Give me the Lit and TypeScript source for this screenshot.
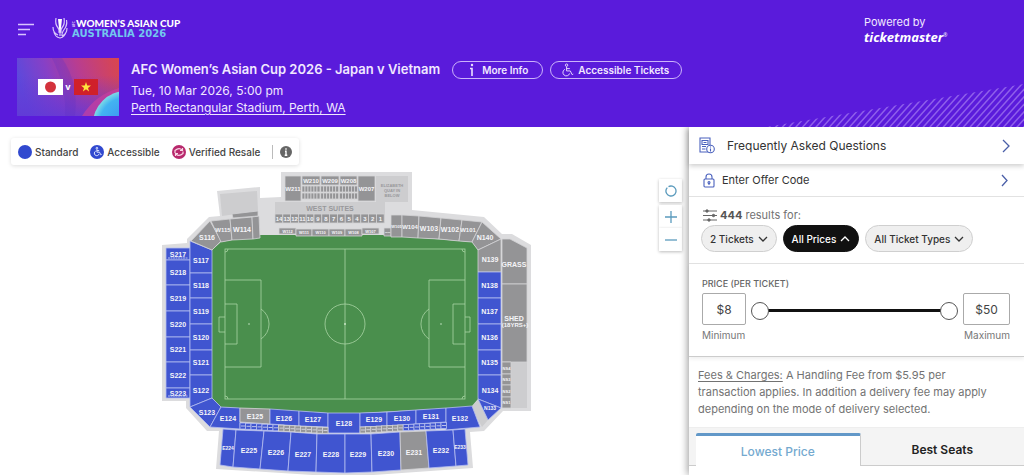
import { LitElement, html, svg, css } from "lit";
import { customElement, state } from "lit/decorators.js";

type Tone = "sold" | "open";
interface Section { label: string; points: string; x: number; y: number; tone: Tone; size?: number; }

const sec = (label: string, tone: Tone, points: string, x: number, y: number, size = 7): Section => ({ label, tone, points, x, y, size });
const box = (label: string, tone: Tone, x1: number, y1: number, x2: number, y2: number, size = 7): Section =>
  sec(label, tone, `${x1},${y1} ${x2},${y1} ${x2},${y2} ${x1},${y2}`, (x1 + x2) / 2, (y1 + y2) / 2, size);

const SECTIONS: Section[] = [
  box("S217", "open", 166, 248, 190, 260), box("S218", "open", 166, 260, 190, 285),
  box("S219", "open", 166, 285, 190, 311), box("S220", "open", 166, 311, 190, 337),
  box("S221", "open", 166, 337, 190, 362), box("S222", "open", 166, 362, 190, 388),
  box("S223", "open", 166, 388, 190, 398),
  sec("S117", "open", "190,241 212,250 212,273 190,273", 201, 260),
  box("S118", "open", 190, 273, 212, 298), box("S119", "open", 190, 298, 212, 324),
  box("S120", "open", 190, 324, 212, 350), box("S121", "open", 190, 350, 212, 375),
  sec("S122", "open", "190,375 212,375 212,398 190,407", 201, 390),
  sec("S123", "open", "190,407 212,398 221,407 210,427", 207, 412),
  sec("S116", "sold", "210,221 221,241 212,250 191,241", 207, 237),
  sec("W115", "sold", "211,221 230,219 232,240 221,242", 223, 230, 6),
  sec("W114", "sold", "230,219 252,217 253,239 232,240", 242, 229),
  sec("", "sold", "252,217 259,216 260,238 253,239", 256, 228, 3),
  sec("", "sold", "232,214 258,211 258,216 233,218", 256, 228, 3),
  box("W211", "sold", 285, 176, 301, 201, 6),
  box("W210", "sold", 302, 176, 320, 185, 6), box("W209", "sold", 321, 176, 339, 185, 6),
  box("W208", "sold", 340, 176, 357, 185, 6), box("W207", "sold", 358, 176, 375, 201, 6),
  box("W112", "sold", 279, 228, 296, 234, 4), box("W111", "sold", 296, 229, 312, 236, 4),
  box("W110", "sold", 312, 229, 329, 236, 4), box("W109", "sold", 329, 229, 345, 236, 4),
  box("W108", "sold", 345, 229, 362, 236, 4), box("W107", "sold", 362, 228, 379, 234, 4),
  box("W106", "sold", 384, 228, 391, 236, 2),
  box("W105", "sold", 391, 215, 402, 237, 4),
  sec("W104", "sold", "402,215 419,216 418,238 402,237", 410, 227, 6),
  sec("W103", "sold", "419,216 441,218 439,239 418,238", 429, 228),
  sec("W102", "sold", "441,218 462,220 459,241 439,239", 450, 229),
  sec("W101", "sold", "462,220 482,222 472,242 459,241", 468, 230, 6),
  sec("N140", "sold", "482,222 501,239 478,250 472,242", 485, 237),
  sec("N139", "sold", "478,250 501,239 501,272 478,272", 490, 259),
  box("N138", "open", 478, 272, 501, 298), box("N137", "open", 478, 298, 501, 324),
  box("N136", "open", 478, 324, 501, 350), box("N135", "open", 478, 350, 501, 375),
  sec("N134", "open", "478,375 501,375 501,408 478,399", 490, 390),
  sec("N133", "open", "478,399 501,408 488,420", 490, 408, 5),
  sec("GRASS", "sold", "502,239 510,239 527,248 527,284 502,284", 514, 264),
  box("", "sold", 502, 284, 527, 362),
  box("NS4", "sold", 502, 362, 511, 374, 4), box("NS3", "sold", 502, 374, 511, 385, 4),
  box("NS2", "sold", 502, 385, 511, 397, 4), box("NS1", "sold", 502, 397, 511, 408, 4),
  sec("E124", "open", "221,407 240,408 240,429 210,427", 228, 418),
  sec("E125", "sold", "240,408 270,409 270,424 240,422", 255, 416),
  sec("E126", "open", "270,409 299,411 299,426 270,424", 284, 418),
  sec("E127", "open", "299,411 328,413 328,427 299,426", 313, 419),
  sec("E128", "open", "328,413 360,413 360,433 328,433", 344, 423),
  sec("E129", "open", "360,413 387,412 387,426 360,427", 374, 419),
  sec("E130", "open", "387,412 416,410 416,424 387,426", 402, 418),
  sec("E131", "open", "416,410 446,408 446,422 416,424", 431, 416),
  sec("E132", "open", "446,408 472,406 480,427 446,430", 460, 418),
  sec("E224", "open", "223,429 236,430 233,467 220,465", 228, 448, 5),
  sec("E225", "open", "236,430 264,431 260,469 233,467", 249, 450),
  sec("E226", "open", "264,431 291,432 288,471 260,469", 276, 452),
  sec("E227", "open", "291,432 317,434 316,472 288,471", 303, 454),
  sec("E228", "open", "317,434 345,434 345,473 316,472", 331, 454),
  sec("E229", "open", "345,434 371,434 372,472 345,473", 358, 454),
  sec("E230", "open", "371,434 400,432 401,470 372,472", 386, 453),
  sec("E231", "sold", "400,432 426,431 429,468 401,470", 414, 452),
  sec("E232", "open", "426,431 453,430 456,466 429,468", 441, 450),
  sec("E233", "open", "453,430 465,429 468,465 456,466", 460, 447, 5),
];

const range = (n: number) => Array.from({ length: n }, (_, i) => i);

const chevron = (d: string, w: number, h: number) => html`<svg class="chev" width=${w} height=${h} viewBox="0 0 ${w} ${h}" aria-hidden="true"><path d=${d} /></svg>`;
const wheelchair = svg`<circle cx="6" cy="1.8" r="1.3"/><path d="M6 3.5V8h4l2 4 1.2-.6M6 5.5h3.5M4.2 6.3A3.7 3.7 0 1 0 9.3 10.7"/>`;

@customElement("seat-map")
export class SeatMap extends LitElement {
  static styles = css`
    :host { display: flex; justify-content: center; }
    svg { display: block; font-family: "Liberation Sans", Arial, sans-serif; font-weight: 700; }
    .shell { fill: #dcdcde; }
    .pale { fill: #cdcdcf; }
    .sold { fill: #949496; stroke: #d3d3d5; stroke-width: 0.8; }
    .open { fill: #4055d0; stroke: #b4bdf0; stroke-width: 0.8; }
    .grass { fill: #4a8f4d; }
    .line { fill: none; stroke: #a9d4a4; stroke-width: 0.8; }
    .dot { fill: #c7e5c3; }
    .seat { stroke: #dde; stroke-width: 0.8; }
    text { fill: #f4f4f8; text-anchor: middle; dominant-baseline: central; }
    .dim { fill: #98989b; }
  `;
  render() {
    return html`<svg width="376" height="307" viewBox="156 168 376 307" role="img" aria-label="Stadium seat map">
      <polygon class="shell" points="217,191 260,187 260,198 281,197 281,172 412,172 412,210 484,217 502,234 512,234 531,245 531,411 503,411 484,431 470,432 473,468 345,477 216,469 219,431 207,431 186,408 186,401 162,401 162,245 187,243 187,239 209,217 220,216" />
      <polygon class="pale" points="220,194 257,191 258,211 222,216" />
      <rect class="pale" x="275" y="202" width="110" height="21" />
      <rect class="pale" x="376" y="176" width="32" height="26" />
      <rect class="pale" x="511" y="362" width="16" height="46" />
      <polygon class="pale" points="471,407 478,400 488,420 482,427" />
      <polygon class="grass" points="212,250 221,242 260,235 384,235 472,242 478,250 478,399 471,407 360,413 328,413 221,407 212,398" />
      <g class="line">
        <rect x="225" y="249" width="240" height="150" /><path d="M345 249v150" /><circle cx="345" cy="324" r="20" />
        <path d="M225 280h36v87h-36M225 304h12v40h-12M225 317h-6v15h6M261 309a18 18 0 0 1 0 30" />
        <path d="M465 280h-36v87h36M465 304h-12v40h12M465 317h5v15h-5M429 309a18 18 0 0 0 0 30" />
        <path d="M225 252a3 3 0 0 0 3-3M462 249a3 3 0 0 0 3 3M225 396a3 3 0 0 1 3 3M462 399a3 3 0 0 1 3-3" />
      </g>
      <g class="dot"><circle cx="249" cy="324" r="0.8" /><circle cx="345" cy="324" r="1" /><circle cx="441" cy="324" r="0.8" /></g>
      ${SECTIONS.map((s) => svg`<polygon class=${s.tone} points=${s.points} /><text x=${s.x} y=${s.y} font-size=${s.size}>${s.label}</text>`)}
      ${range(3).map((b) => range(12).map((i) => svg`<rect class="sold" x=${302 + b * 18.7 + (i % 6) * 3} y=${186 + Math.floor(i / 6) * 7} width="3" height="6" />`))}
      ${range(14).map((i) => svg`<rect class="sold" x=${275 + i * 7.8} y="214" width="7.8" height="9" /><text x=${279 + i * 7.8} y="219" font-size="6">${14 - i}</text>`)}
      ${range(16).map((i) => svg`<rect class=${i < 7 ? "open" : "sold"} x=${240 + i * 5.5} y=${423 + i * 0.3} width="5.5" height="6" /><path class="seat" d="M${241 + i * 5.5} ${426 + i * 0.3}h4" />`)}
      ${range(16).map((i) => svg`<rect class=${i > 7 ? "open" : "sold"} x=${360 + i * 5.4} y=${427 - i * 0.3} width="5.4" height="6" /><path class="seat" d="M${361 + i * 5.4} ${430 - i * 0.3}h4" />`)}
      <path d="M168 258h20M168 396h20" stroke="#b4bdf0" stroke-width="1.2" stroke-dasharray="2 0.5" />
      <text class="dim" x="330" y="208" font-size="7">WEST SUITES</text>
      <g font-size="4"><text class="dim" x="392" y="185">ELIZABETH</text><text class="dim" x="392" y="190">QUAY IN</text><text class="dim" x="392" y="195">BELOW</text></g>
      <text x="514" y="318" font-size="7">SHED</text><text x="515" y="325" font-size="6">(18YRS+)</text>
    </svg>`;
  }
}

@customElement("event-header")
export class EventHeader extends LitElement {
  static styles = css`
    :host { display: block; position: relative; background: #5a1bdb; color: #f1e8ff; height: 127px; box-sizing: border-box; padding: 16px 16px 0 17px; }
    .stripes { position: absolute; right: 0; bottom: 0; }
    .top { display: flex; align-items: flex-start; gap: 17px; height: 42px; }
    .menu { border: 0; background: none; padding: 4px 0 0; width: 17px; height: 22px; }
    .menu svg, .logo svg { display: block; }
    .power { margin-left: auto; width: 144px; font-size: 11px; line-height: 13px; }
    .brand { font: italic 700 13px/16px "Open Sans", sans-serif; color: #fff; display: flex; }
    .brand sup { font: 400 5px/12px "Open Sans", sans-serif; }
    .event { display: flex; gap: 12px; }
    .line { display: flex; align-items: center; gap: 12px; height: 23px; margin-bottom: 1px; }
    h1 { margin: 0; font-size: 13px; line-height: 19px; font-weight: 600; white-space: nowrap; }
    .info { line-height: 17px; font-size: 12px; }
    .info a { color: inherit; text-underline-offset: 2px; }
    .info p { margin: 0; }
    .pills { display: flex; gap: 7px; }
    .pills button { display: flex; align-items: center; justify-content: center; gap: 6px; height: 18px; padding: 0 14px; border: 1px solid #cbb2fb; border-radius: 9px; background: none; color: inherit; font: 600 10px/16px Inter, sans-serif; white-space: nowrap; }
    .pills .wide { padding: 0 12px 0 10px; gap: 4px; }
    .pills svg { fill: none; stroke: #eadfff; stroke-width: 1; }
  `;
  render() {
    return html`
      <svg class="stripes" width="258" height="43" viewBox="0 0 258 43" aria-hidden="true">
        <defs><clipPath id="wedge"><path d="M0 43L258 0V43Z" /></clipPath></defs>
        <g clip-path="url(#wedge)" stroke="#8f60ea" stroke-width="1.5">${range(46).map((i) => svg`<path d="M${i * 6.7 - 12} 45l42 -47" />`)}</g>
      </svg>
      <div class="top">
        <button class="menu" aria-label="Menu"><svg width="17" height="13" viewBox="0 0 17 13" stroke="#d9c4ff" stroke-width="1.3"><path d="M1 1.5h16M1 6.5h12M1 11.5h8" /></svg></button>
        <div class="logo"><svg width="134" height="25" viewBox="51 16 134 25" role="img" aria-label="AFC Women's Asian Cup Australia 2026">
          <g fill="none" stroke="#d9c8fb" stroke-width="1.2"><path d="M56 18q-1 6 1.5 9t1.5 6M64 18q1 6-1.5 9t-1.5 6M66.5 20q1 5-2 9t-2.5 7M53 27q0 6 5 8M67 28q0 6-5 8M54 32q1 5 6 6 5-1 6-6" /></g>
          <path d="M58 19h4l-1 9q-1 4-.5 8h-1q.5-4-.5-8z" fill="#fff" />
          <text font-family="Lato, sans-serif" font-size="3" font-weight="700" fill="#e6dcff" transform="translate(75 27) rotate(-90)">AFC</text>
          <text x="76" y="27" font-family="Lato, sans-serif" font-size="10" font-weight="900" fill="#fff">WOMEN’S ASIAN CUP</text>
          <text x="72" y="37" font-family="DejaVu Sans, sans-serif" font-size="10" font-weight="700" fill="#73c6ee">AUSTRALIA 2026</text>
        </svg></div>
        <div class="power">Powered by<div class="brand">ticketmaster<sup>®</sup></div></div>
      </div>
      <div class="event">
        <svg width="102" height="58" viewBox="0 0 102 58" role="img" aria-label="Japan v Vietnam">
          <defs>
            <linearGradient id="art" x1="0" y1=".3" x2="1" y2=".1"><stop offset="0" stop-color="#5c49dc" /><stop offset=".3" stop-color="#8740c6" /><stop offset=".6" stop-color="#b83d91" /><stop offset="1" stop-color="#d9464f" /></linearGradient>
            <linearGradient id="base" x1="0" y1="0" x2="0" y2="1"><stop offset=".3" stop-color="#6a35cf" stop-opacity="0" /><stop offset="1" stop-color="#6238d6" stop-opacity=".8" /></linearGradient>
            <radialGradient id="orb"><stop offset="0" stop-color="#3d8cf0" /><stop offset=".8" stop-color="#42b3f2" /><stop offset="1" stop-color="#7edbe6" /></radialGradient>
          </defs>
          <rect width="102" height="58" fill="url(#art)" /><rect width="102" height="58" fill="url(#base)" />
          <path d="M35 0Q50 30 48 58H58Q62 25 45 0z" fill="#5d2ec4" opacity=".25" />
          <path d="M65 58Q78 37 102 30V58z" fill="#c83fa0" opacity=".7" /><circle cx="109" cy="66" r="33" fill="url(#orb)" />
          <rect x="21" y="21" width="25" height="16" fill="#fff" /><circle cx="33.5" cy="29" r="5.5" fill="#d3323c" />
          <text x="51" y="32" font-family="Inter, sans-serif" font-weight="700" font-size="9" fill="#fff" text-anchor="middle">v</text>
          <rect x="57" y="21" width="24" height="16" fill="#d0202a" /><path d="M69 24l1.2 3.6h3.8l-3 2.3 1.1 3.6-3.1-2.2-3.1 2.2 1.1-3.6-3-2.3h3.8z" fill="#fde53d" />
        </svg>
        <div>
          <div class="line"><h1>AFC Women’s Asian Cup 2026 - Japan v Vietnam</h1>
            <div class="pills">
              <button><svg width="9" height="14" viewBox="0 0 9 14"><circle cx="5" cy="2" r="1.2" fill="#eadfff" stroke="none" /><path d="M3 5.5h2V13" stroke-width="1.6" /></svg>More Info</button>
              <button class="wide"><svg width="13" height="14" viewBox="0 0 14 14">${wheelchair}</svg>Accessible Tickets</button>
            </div>
          </div>
          <div class="info"><p>Tue, 10 Mar 2026, 5:00 pm</p><p><a href="#venue">Perth Rectangular Stadium, Perth, WA</a></p></div>
        </div>
      </div>`;
  }
}

@customElement("ticket-panel")
export class TicketPanel extends LitElement {
  @state() private low = 8;
  @state() private high = 50;
  static styles = css`
    :host { display: block; background: #fff; color: #333; box-shadow: -2px 0 7px #0005; }
    button, input { font-family: Inter, sans-serif; color: inherit; box-sizing: border-box; }
    .row { display: flex; align-items: center; width: 100%; border: 0; background: #fff; text-align: left; }
    .row .chev { margin-left: auto; stroke: #4a5fa8; }
    .chev { fill: none; stroke: currentColor; stroke-width: 1.3; }
    .faq { height: 37px; padding: 0 14px 0 10px; gap: 12px; font-size: 12px; position: relative; box-shadow: 0 2px 5px #0003; }
    .offer { height: 33px; padding: 0 16px 0 14px; gap: 7px; font-size: 11px; border-bottom: 1px solid #e2e2e2; }
    .ico { fill: none; stroke: #4a61bd; stroke-width: 1.1; }
    .results { padding: 8px 14px 0; height: 67px; box-sizing: border-box; border-bottom: 1px solid #e2e2e2; }
    .count { display: flex; align-items: center; gap: 3px; margin: 0; font-size: 11px; line-height: 20px; color: #727272; }
    .count b { color: #555; }
    .count svg { stroke: #666; fill: #666; }
    .filters { display: flex; gap: 6px; margin-left: -2px; }
    .filters button { display: flex; align-items: center; gap: 4px; height: 27px; padding: 0 8px; border: 1px solid #cfcfcf; border-radius: 14px; background: #efefef; font-size: 10px; font-weight: 500; white-space: nowrap; }
    .filters .on { background: #111; border-color: #111; color: #fff; }
    .price { padding: 14px 14px 0 13px; height: 93px; box-sizing: border-box; border-bottom: 1px solid #ccc; box-shadow: 0 2px 4px #0001; }
    .price h2 { margin: 0 0 3px; font-size: 9px; line-height: 12px; font-weight: 500; color: #666; }
    .grid { display: grid; grid-template-columns: 44px 1fr 47px; column-gap: 5px; row-gap: 2px; align-items: center; }
    .amount { width: 100%; height: 32px; border: 1px solid #aaa; border-radius: 2px; background: #fff; text-align: center; font-size: 12px; padding: 0; color: #444; }
    .grid label { font-size: 10px; line-height: 16px; color: #777; }
    .max { grid-column: 3; text-align: right; }
    .slider { display: grid; align-items: center; background: linear-gradient(#111, #111) center / calc(100% - 18px) 3px no-repeat; height: 20px; margin-top: 3px; }
    .slider input { grid-area: 1 / 1; appearance: none; width: 100%; height: 20px; margin: 0; background: none; pointer-events: none; }
    .slider input::-webkit-slider-thumb { appearance: none; pointer-events: auto; box-sizing: border-box; width: 18px; height: 18px; border: 1px solid #555; border-radius: 50%; background: #fff; }
    .fees { margin: 0; padding: 10px 24px 9px 9px; font-size: 11px; line-height: 17px; color: #727272; }
    .fees a { color: inherit; text-underline-offset: 2px; }
    .tabs { display: flex; background: #f4f4f4; padding: 5px 0 0 7px; border-top: 1px solid #eee; box-shadow: inset 0 -1px #ccc; }
    .tabs button { flex: 1 1 0; height: 33px; border: 0; background: none; font-size: 12px; font-weight: 600; color: #222; }
    .tabs .on { background: #fff; border-top: 3px solid #6298c8; border-right: 1px solid #ccc; border-radius: 2px 2px 0 0; color: #74a9cf; font-weight: 500; }
  `;
  render() {
    return html`
      <button class="row faq"><svg class="ico" width="16" height="17" viewBox="0 0 16 17"><path d="M10 15H1V1h10v7M3 3.5h6v4H3zM4.5 5.5h3M3 9.5h4M3 12h3.5" /><circle cx="11.5" cy="12" r="3.8" fill="#fff" /><path d="M11.5 11.5v3M11.5 9.5v1" /></svg>Frequently Asked Questions${chevron("M1 1l6 6-6 6", 8, 14)}</button>
      <button class="row offer"><svg class="ico" width="12" height="15" viewBox="0 0 12 15"><rect x="1" y="6" width="10" height="8" rx="1" /><path d="M3 6V4a3 3 0 0 1 6 0v2M6 10v2" /><circle cx="6" cy="9.5" r="1" /></svg>Enter Offer Code${chevron("M1 1l5 5.5-5 5.5", 7, 13)}</button>
      <div class="results">
        <p class="count"><svg width="14" height="13" viewBox="0 0 14 13" aria-hidden="true"><path d="M0 2h14M0 6.5h14M0 11h14" /><circle cx="4" cy="2" r="1.2" /><circle cx="10.5" cy="6.5" r="1.2" /><circle cx="6" cy="11" r="1.2" /></svg><span><b>444</b> results for:</span></p>
        <div class="filters">
          <button>2 Tickets ${chevron("M1 1l4 4 4-4", 10, 6)}</button>
          <button class="on">All Prices ${chevron("M1 5l4-4 4 4", 10, 6)}</button>
          <button>All Ticket Types ${chevron("M1 1l4 4 4-4", 10, 6)}</button>
        </div>
      </div>
      <section class="price">
        <h2>PRICE (PER TICKET)</h2>
        <div class="grid">
          <input class="amount" id="min" .value=${"$" + this.low} />
          <div class="slider">
            <input type="range" aria-label="Minimum price" min="8" max="50" .value=${String(this.low)} @input=${(e: Event) => (this.low = Number((e.target as HTMLInputElement).value))} />
            <input type="range" aria-label="Maximum price" min="8" max="50" .value=${String(this.high)} @input=${(e: Event) => (this.high = Number((e.target as HTMLInputElement).value))} />
          </div>
          <input class="amount" id="max" .value=${"$" + this.high} />
          <label for="min">Minimum</label><label class="max" for="max">Maximum</label>
        </div>
      </section>
      <p class="fees"><a href="#fees">Fees &amp; Charges:</a> A Handling Fee from $5.95 per transaction applies. In addition a delivery fee may apply depending on the mode of delivery selected.</p>
      <div class="tabs" role="tablist"><button class="on" role="tab" aria-selected="true">Lowest Price</button><button role="tab" aria-selected="false">Best Seats</button></div>`;
  }
}

@customElement("app-root")
export class AppRoot extends LitElement {
  static styles = css`
    :host { display: flex; flex-direction: column; height: 100vh; overflow: hidden; font-family: Inter, sans-serif; background: #fff; }
    .body { display: flex; flex: 1; min-height: 0; }
    ticket-panel { flex: 0 0 335px; position: relative; }
    event-header { z-index: 1; }
    main { flex: 1; display: grid; grid-template-columns: 1fr auto; grid-template-rows: 41px 1fr; min-width: 0; padding: 0 7px 0 11px; }
    .legend { justify-self: start; align-self: start; display: flex; align-items: center; gap: 12px; margin-top: 11px; height: 27px; padding: 0 7px; border-radius: 3px; box-shadow: 0 1px 4px #0002; font-size: 10px; font-weight: 500; color: #444; }
    .legend span { display: flex; align-items: center; gap: 3px; }
    .legend svg { display: block; fill: none; stroke-width: 1; }
    .legend .bar { border-left: 1px solid #bbb; padding-left: 7px; height: 14px; }
    .legend button { border: 0; padding: 0; background: none; }
    seat-map { grid-row: 2; padding-left: 18px; }
    .zoom { grid-column: 2; grid-row: 2; display: flex; flex-direction: column; padding-top: 11px; }
    .zoom button { width: 23px; height: 23px; padding: 0; border: 0; background: #fff; box-shadow: 0 1px 3px #0004; display: grid; place-items: center; }
    .zoom button:first-child { margin-bottom: 3px; }
    .zoom svg { fill: none; stroke: #5b9bbd; stroke-width: 1.3; }
  `;
  render() {
    return html`
      <event-header></event-header>
      <div class="body">
        <main>
          <div class="legend">
            <span><svg width="14" height="14"><circle cx="7" cy="7" r="7" fill="#3149cf" /></svg>Standard</span>
            <span><svg width="14" height="14" viewBox="0 0 14 14"><circle cx="7" cy="7" r="7" fill="#3149cf" /><g stroke="#dfe5ff" transform="translate(3 2) scale(.65)" stroke-width="1.5">${wheelchair}</g></svg>Accessible</span>
            <span><svg width="14" height="14"><circle cx="7" cy="7" r="7" fill="#b8296c" /><path d="M3 8V5.5Q7 2 10 5M10.5 3v2.5H8M11 6.5V8.5Q7 12 4 9M3.5 11V8.5H6" stroke="#f7d7e5" stroke-width="1.2" /></svg>Verified Resale</span>
            <span class="bar"><button aria-label="Legend information"><svg width="12" height="12"><circle cx="6" cy="6" r="6" fill="#666" /><path d="M6 2.2v1.6M5 5.3h1V9M4.7 9.2h2.6" stroke="#fff" stroke-width="1.4" /></svg></button></span>
          </div>
          <seat-map></seat-map>
          <div class="zoom">
            <button aria-label="Reset map"><svg width="12" height="12"><circle cx="6" cy="6" r="5" stroke-dasharray="29 2.4" transform="rotate(240 6 6)" /></svg></button>
            <button aria-label="Zoom in"><svg width="12" height="12"><path d="M6 0v12M0 6h12" /></svg></button>
            <button aria-label="Zoom out"><svg width="12" height="12"><path d="M0 6h12" /></svg></button>
          </div>
        </main>
        <ticket-panel></ticket-panel>
      </div>`;
  }
}
